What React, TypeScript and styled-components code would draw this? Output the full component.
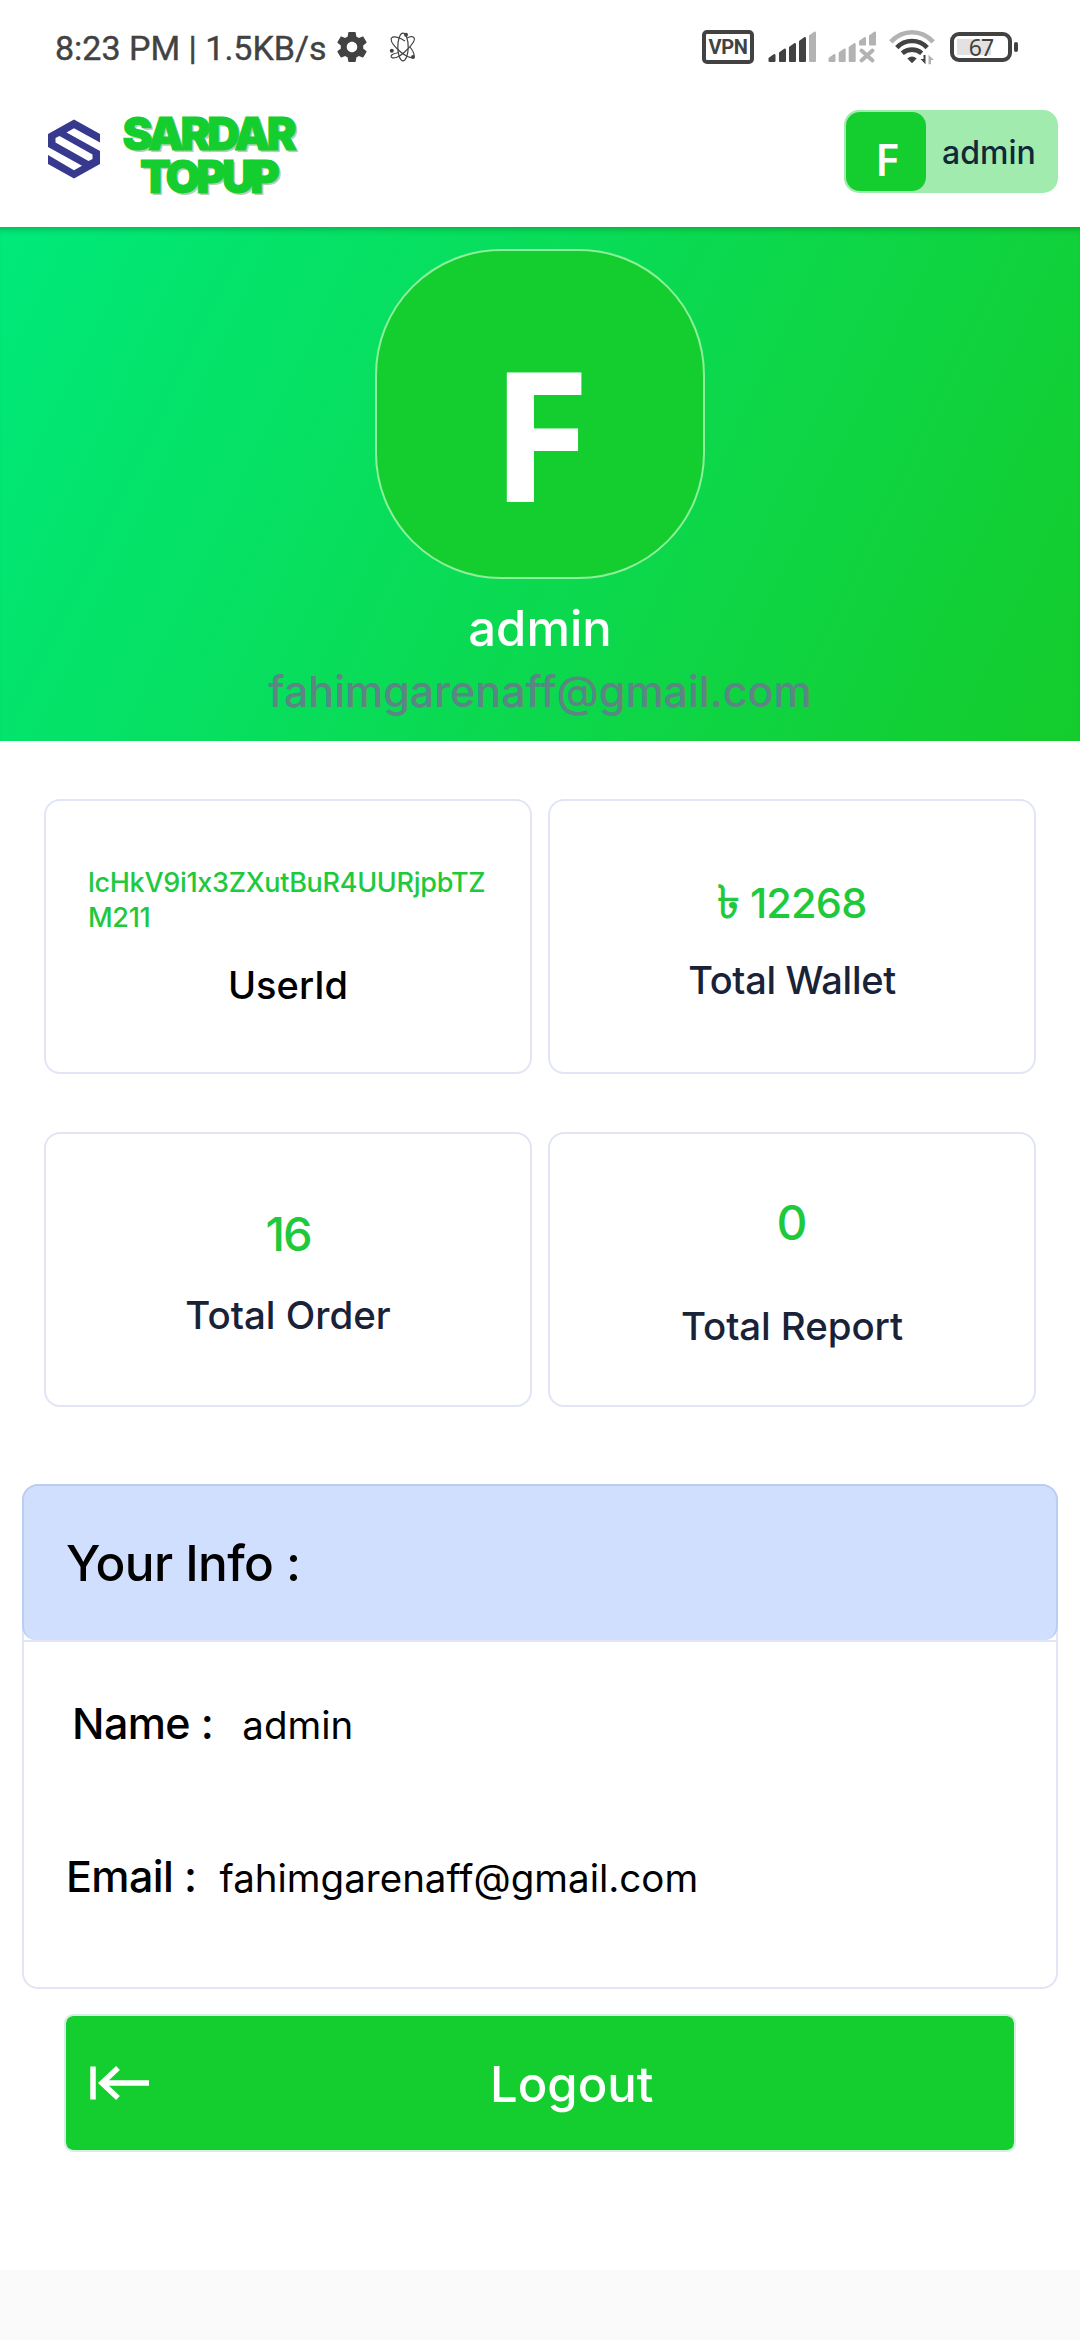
import React from "react";
import styled, { createGlobalStyle } from "styled-components";

const DARK = "#424242";
const PALE = "#b3b3b3";
const GREEN = "#14cd2e";
const VALUE = "#1ec93c";
const INK = "#1a2238";

const GlobalStyle = createGlobalStyle`
  * { box-sizing: border-box; }
  body { margin: 0; background: #ffffff; }
`;

const Screen = styled.main`
  width: 1080px;
  height: 2340px;
  display: flex;
  flex-direction: column;
  background: #ffffff;
  font-family: "Inter", "Noto Sans", sans-serif;
  font-feature-settings: "calt" 0;
  overflow: hidden;
`;

type TextProps = {
  $size: number;
  $line?: number;
  $weight?: number;
  $spacing?: number;
  $color?: string;
  $top?: number;
};

const Text = styled.span<TextProps>`
  display: block;
  margin-top: ${(p) => p.$top ?? 0}px;
  font-size: ${(p) => p.$size}px;
  line-height: ${(p) => p.$line ?? 50}px;
  font-weight: ${(p) => p.$weight ?? 500};
  letter-spacing: ${(p) => p.$spacing ?? 0}px;
  color: ${(p) => p.$color ?? "#000000"};
  white-space: nowrap;
`;

/* Status bar */

const StatusBar = styled.div`
  height: 96px;
  flex: none;
  display: flex;
  align-items: center;
  padding: 0 62px 2px 55px;
`;

const Clock = styled.span`
  width: 270px;
  padding-top: 2px;
  font: 400 34px/40px Roboto, sans-serif;
  -webkit-text-stroke: 0.4px ${DARK};
  color: ${DARK};
  white-space: nowrap;
`;

const StatusIcon = styled.svg<{ $left: number }>`
  display: block;
  flex: none;
  margin-left: ${(p) => p.$left}px;
`;

const Vpn = styled.span`
  display: flex;
  align-items: center;
  justify-content: center;
  width: 52px;
  height: 34px;
  margin-left: auto;
  border: 4px solid ${DARK};
  border-radius: 5px;
  font: 700 20px/24px Roboto, sans-serif;
  letter-spacing: -0.4px;
  color: ${DARK};
`;

const Battery = styled.span`
  display: flex;
  align-items: center;
  gap: 2px;
  margin-left: 15px;
`;

const BatteryBody = styled.span`
  display: flex;
  align-items: center;
  justify-content: center;
  width: 62px;
  height: 30px;
  border: 4px solid ${DARK};
  border-radius: 9px;
  background: linear-gradient(#e2e2e2, #e2e2e2) 3px 3px / 34px 16px no-repeat;
  font: 400 23px/22px "Noto Sans", sans-serif;
  letter-spacing: -1px;
  color: ${DARK};
`;

const BatteryTip = styled.span`
  width: 4px;
  height: 10px;
  border-radius: 2px;
  background: ${DARK};
`;

/* Header */

const Header = styled.header`
  height: 131px;
  flex: none;
  display: flex;
  align-items: flex-start;
  justify-content: space-between;
  padding: 14px 22px 0 48px;
`;

const Brand = styled.div`
  display: flex;
  align-items: flex-start;
`;

const BrandMark = styled.svg`
  display: block;
  margin-top: 9px;
`;

const BrandName = styled.div`
  width: 174px;
  margin-left: 21px;
  padding-top: 2px;
  display: flex;
  flex-direction: column;
  align-items: center;
`;

const BrandLine = styled.span<{ $spacing: number }>`
  font: 900 45px/43px Inter, sans-serif;
  letter-spacing: ${(p) => p.$spacing}px;
  color: ${GREEN};
  -webkit-text-stroke: 1px ${GREEN};
  text-shadow: 2px 2px 0 #b9cdb9;
  white-space: nowrap;
`;

const UserChip = styled.div`
  width: 214px;
  height: 83px;
  display: flex;
  align-items: center;
  padding: 2px;
  border-radius: 15px;
  background: #a2ebae;
`;

const ChipInitial = styled.span`
  width: 80px;
  height: 79px;
  display: flex;
  align-items: center;
  justify-content: center;
  padding: 14px 0 0 2px;
  margin-right: 16px;
  border-radius: 14px;
  background: ${GREEN};
  font: 600 45px/50px "Open Sans", sans-serif;
  color: #ffffff;
`;

/* Profile banner */

const Banner = styled.section`
  height: 514px;
  flex: none;
  display: flex;
  flex-direction: column;
  align-items: center;
  padding-top: 22px;
  background: linear-gradient(115.5deg, #00e97a 0%, #14cc2c 100%);
  box-shadow: inset 0 7px 6px -5px rgba(0, 60, 10, 0.3);
`;

const Avatar = styled.div`
  width: 330px;
  height: 330px;
  display: flex;
  align-items: center;
  justify-content: center;
  padding: 33px 0 0 1px;
  border: 2px solid #8df09a;
  border-radius: 126px;
  background: ${GREEN};
  font: 700 182px/200px "Open Sans", sans-serif;
  color: #ffffff;
`;

/* Stat cards */

const Stats = styled.section`
  display: grid;
  grid-template-columns: 488px 488px;
  grid-auto-rows: 275px;
  gap: 58px 16px;
  padding: 58px 44px 0;
`;

const Card = styled.article<{ $pad: number }>`
  display: flex;
  flex-direction: column;
  align-items: center;
  padding: ${(p) => p.$pad}px 42px 0;
  border: 2px solid #e1e5f6;
  border-radius: 16px;
`;

const UserCode = styled(Text)`
  align-self: stretch;
  white-space: normal;
  word-break: break-all;
`;

const Taka = styled.span`
  font-size: 46px;
  -webkit-text-stroke: 0.9px ${VALUE};
`;

/* Info panel */

const Panel = styled.section`
  height: 505px;
  flex: none;
  margin: 77px 22px 0;
  border: 2px solid #e1e5f6;
  border-top: 0;
  border-radius: 16px;
`;

const PanelHead = styled.div`
  height: 156px;
  margin: 0 -2px;
  display: flex;
  align-items: center;
  padding-left: 42px;
  border: 2px solid #bacdf2;
  border-bottom: 0;
  border-radius: 16px 16px 14px 14px;
  background: #d1dfff;
`;

const PanelBody = styled.div`
  border-top: 2px solid #e1e5f6;
  padding-top: 51px;
`;

const Field = styled.div<{ $left: number; $gap: number }>`
  display: flex;
  align-items: baseline;
  gap: ${(p) => p.$gap}px;
  height: 60px;
  margin-bottom: 92.5px;
  padding-left: ${(p) => p.$left}px;
`;

/* Logout */

const LogoutButton = styled.button`
  width: 952px;
  height: 138px;
  flex: none;
  margin: 25px 64px 0;
  display: flex;
  align-items: center;
  padding: 0 0 0 24px;
  border: 2px solid #d6ede4;
  border-radius: 9px;
  background: ${GREEN};
  background-clip: padding-box;
  font-family: inherit;
`;

const LogoutIcon = styled.svg`
  display: block;
  flex: none;
  margin-right: 340px;
`;

const Footer = styled.footer`
  height: 70px;
  flex: none;
  margin-top: auto;
  background: #fafafa;
`;

const Gear = () => (
  <StatusIcon $left={12} width="30" height="30" viewBox="2 2 20 20">
    <path
      fill={DARK}
      d="M19.43 12.98c.04-.32.07-.64.07-.98s-.03-.66-.07-.98l2.11-1.65c.19-.15.24-.42.12-.64l-2-3.46c-.12-.22-.39-.3-.61-.22l-2.49 1c-.52-.4-1.08-.73-1.69-.98l-.38-2.65C14.46 2.18 14.25 2 14 2h-4c-.25 0-.46.18-.49.42l-.38 2.65c-.61.25-1.17.59-1.69.98l-2.49-1c-.23-.09-.49 0-.61.22l-2 3.46c-.13.22-.07.49.12.64l2.11 1.65c-.04.32-.07.65-.07.98s.03.66.07.98l-2.11 1.65c-.19.15-.24.42-.12.64l2 3.46c.12.22.39.3.61.22l2.49-1c.52.4 1.08.73 1.69.98l.38 2.65c.03.24.24.42.49.42h4c.25 0 .46-.18.49-.42l.38-2.65c.61-.25 1.17-.59 1.69-.98l2.49 1c.23.09.49 0 .61-.22l2-3.46c.12-.22.07-.49-.12-.64l-2.11-1.65zM12 15.5c-1.93 0-3.5-1.57-3.5-3.5s1.57-3.5 3.5-3.5 3.5 1.57 3.5 3.5-1.57 3.5-3.5 3.5z"
    />
  </StatusIcon>
);

const Atom = () => (
  <StatusIcon $left={22} width="28" height="30" viewBox="0 0 28 30">
    <g fill="none" stroke={DARK} strokeWidth="1.2">
      <ellipse cx="14" cy="15" rx="5.2" ry="13.8" />
      <path d="M10 20.5C4 21.5 1 23 2.5 25.2c2 1.600 7 .5 12-4.200C20 16 26.500 9 25.200 6c-1-2-4.500-1.500-7 0" />
      <path d="M16 9C10 5 4 3.800 2.600 6 1 8.500 5 14 10.500 19c5 4.500 12 8 14 6 1.600-2-.5-6-3.500-10" />
    </g>
    <circle cx="17" cy="2.8" r="2" fill={DARK} />
    <circle cx="2.8" cy="18.8" r="2" fill={DARK} />
    <circle cx="24" cy="25" r="2" fill={DARK} />
  </StatusIcon>
);

const barPath = (x: number, top: number, bottom = 32) =>
  `M${x} ${top + 4}L${x + 5.5} ${top}Q${x + 7} ${top} ${x + 7} ${top + 1}V${bottom - 1}Q${x + 7} ${bottom} ${x + 6} ${bottom}H${x + 1}Q${x} ${bottom} ${x} ${bottom - 1}Z`;

const Signal = () => (
  <StatusIcon $left={14} width="48" height="34" viewBox="0 0 48 34">
    <g fill={DARK}>
      <path d={barPath(0.5, 24)} />
      <path d={barPath(11, 18.5)} />
      <path d={barPath(21, 13)} />
      <path d={barPath(31, 7)} />
    </g>
    <path fill={PALE} d={barPath(41, 1.5)} />
  </StatusIcon>
);

const NoSignal = () => (
  <StatusIcon $left={12} width="48" height="34" viewBox="0 0 48 34">
    <g fill={PALE}>
      <path d={barPath(0.5, 24)} />
      <path d={barPath(10.7, 18.5)} />
      <path d={barPath(20.7, 13)} />
      <path d={barPath(31, 7, 15.5)} />
      <path d={barPath(41, 1.5, 15.5)} />
    </g>
    <path d="M33.500 20.500l11 10M44.500 20.500l-11 10" stroke={PALE} strokeWidth="4" strokeLinecap="round" />
  </StatusIcon>
);

const Wifi = () => (
  <StatusIcon $left={13} width="46" height="36" viewBox="0 0 46 36">
    <g fill="none" strokeWidth="4.6">
      <path d="M1.800 12.800Q11 3.300 23 3.300T44.200 12.800" stroke={PALE} />
      <path d="M7.800 18.600Q14 12 23 12T38.200 18.600" stroke={DARK} />
      <path d="M13.300 24.200Q17.500 20.600 23 20.600T32.700 24.200" stroke={DARK} />
    </g>
    <path d="M18.300 29.500Q23 25.700 27.700 29.500L23 34.200Z" fill={DARK} />
    <path d="M36.500 26v9.200L31.500 30h3v-4Z" fill={DARK} />
    <path d="M39.500 35.200v-9.500l5.500 5.300h-3v4.200Z" fill={PALE} />
  </StatusIcon>
);

export default function App() {
  return (
    <Screen>
      <GlobalStyle />
      <StatusBar>
        <Clock>8:23 PM | 1.5KB/s</Clock>
        <Gear />
        <Atom />
        <Vpn>VPN</Vpn>
        <Signal />
        <NoSignal />
        <Wifi />
        <Battery>
          <BatteryBody>67</BatteryBody>
          <BatteryTip />
        </Battery>
      </StatusBar>

      <Header>
        <Brand>
          <BrandMark width="52" height="60" viewBox="0 0 52 60">
            <path
              fill="#37398f"
              d="M26 0.500L52 15V23.500L26 9.300L18.500 13.500L52 32V45L26 59.500L0 45V36L26 51.300L34 46.800L0 28V15Z"
            />
            <path fill="#ffffff" d="M7.500 19L11.500 17L44.500 35.500V40L40.500 42L7.500 23.500Z" />
          </BrandMark>
          <BrandName>
            <BrandLine $spacing={-3.3}>SARDAR</BrandLine>
            <BrandLine $spacing={-4}>TOPUP</BrandLine>
          </BrandName>
        </Brand>
        <UserChip>
          <ChipInitial>F</ChipInitial>
          <Text $size={32} $top={2} $color="#10283a">admin</Text>
        </UserChip>
      </Header>

      <Banner>
        <Avatar>F</Avatar>
        <Text $size={49} $line={60} $top={20} $color="#ffffff">admin</Text>
        <Text $size={43} $line={60} $top={2} $color="#5b8684">fahimgarenaff@gmail.com</Text>
      </Banner>

      <Stats>
        <Card $pad={64}>
          <UserCode $size={27} $line={35} $spacing={-0.3} $color={VALUE}>
            lcHkV9i1x3ZXutBuR4UURjpbTZM211
          </UserCode>
          <Text $size={38} $top={25}>UserId</Text>
        </Card>
        <Card $pad={75}>
          <Text $size={41.5} $spacing={-0.8} $color={VALUE}>
            <Taka>৳</Taka> 12268
          </Text>
          <Text $size={38} $top={27} $spacing={-0.3} $color={INK}>Total Wallet</Text>
        </Card>
        <Card $pad={70}>
          <Text $size={47} $line={60} $spacing={-2} $color={VALUE}>16</Text>
          <Text $size={38.5} $top={26} $color={INK}>Total Order</Text>
        </Card>
        <Card $pad={59}>
          <Text $size={48} $line={60} $color={VALUE}>0</Text>
          <Text $size={38.5} $top={48} $spacing={-0.1} $color={INK}>Total Report</Text>
        </Card>
      </Stats>

      <Panel>
        <PanelHead>
          <Text $size={49.5} $line={60} $weight={450} $spacing={-0.6}>Your Info :</Text>
        </PanelHead>
        <PanelBody>
          <Field $left={48} $gap={29}>
            <Text $size={43} $line={60} $spacing={-0.6}>Name :</Text>
            <Text $size={38.5} $line={60} $weight={400}>admin</Text>
          </Field>
          <Field $left={42} $gap={23}>
            <Text $size={43} $line={60} $spacing={-0.6}>Email :</Text>
            <Text $size={38.5} $line={60} $weight={400}>fahimgarenaff@gmail.com</Text>
          </Field>
        </PanelBody>
      </Panel>

      <LogoutButton>
        <LogoutIcon width="60" height="36" viewBox="0 0 60 36">
          <path
            d="M3 1.500V34.500M59 18H12M28 3L12 18L28 33"
            fill="none"
            stroke="#ffffff"
            strokeWidth="5.5"
          />
        </LogoutIcon>
        <Text $size={49} $line={60} $top={3} $color="#ffffff">Logout</Text>
      </LogoutButton>

      <Footer />
    </Screen>
  );
}
